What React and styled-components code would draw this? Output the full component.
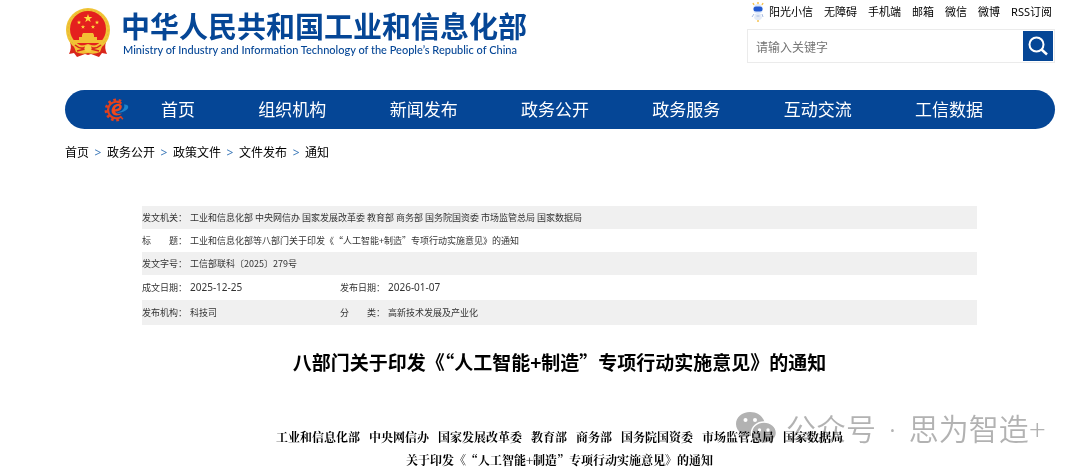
import React from "react";
import styled, { createGlobalStyle } from "styled-components";

const GlobalStyle = createGlobalStyle`
	* {
		box-sizing: border-box;
	}
	body {
		margin: 0;
		background: #fff;
		color: #000;
		font-family: "Noto Sans", "Noto Sans CJK SC", sans-serif;
	}
	a {
		color: inherit;
		text-decoration: none;
	}
`;

const Page = styled.div`
	padding: 0 25px 0 65px;
`;

const Header = styled.header`
	display: flex;
	justify-content: space-between;
	align-items: flex-start;
	height: 90px;
`;

const Brand = styled.a`
	display: flex;
	align-items: flex-start;
	gap: 10px;
	padding-top: 8px;
	color: #054696;
	white-space: nowrap;
`;

const BrandName = styled.h1`
	margin: 0;
	font-family: "Noto Sans CJK SC", sans-serif;
	font-size: 29px;
	font-weight: 700;
	line-height: 34px;
`;

const BrandEnglish = styled.p`
	margin: 0;
	padding-left: 2px;
	font-family: Lato, sans-serif;
	font-size: 11px;
	font-weight: 500;
	line-height: 16px;
`;

const Tools = styled.div`
	width: 308px;
`;

const TopLinks = styled.ul`
	display: flex;
	justify-content: flex-end;
	align-items: center;
	gap: 11px;
	height: 24px;
	margin: 0 0 5px;
	padding: 0 3px 0 0;
	list-style: none;
	font-size: 11px;
	line-height: 24px;
	white-space: nowrap;
`;

const TopLink = styled.a`
	display: flex;
	align-items: center;
	gap: 4px;
`;

const SearchForm = styled.form`
	display: flex;
	align-items: center;
	height: 34px;
	padding-right: 1px;
	border: 1px solid #ebebeb;
`;

const SearchInput = styled.input`
	flex: 1;
	min-width: 0;
	height: 30px;
	padding: 2px 8px 0;
	border: 0;
	outline: 0;
	background: transparent;
	font-family: inherit;
	font-size: 12px;
	&::placeholder {
		color: #757575;
	}
`;

const SearchButton = styled.button`
	display: flex;
	justify-content: center;
	align-items: center;
	width: 30px;
	height: 30px;
	padding: 0;
	border: 0;
	background: #054696;
`;

const Nav = styled.nav`
	display: flex;
	align-items: center;
	height: 39px;
	padding: 0 72px 0 39px;
	border-radius: 20px;
	background: #054696;
	color: #fff;
`;

const NavList = styled.ul`
	flex: 1;
	display: flex;
	justify-content: space-between;
	margin: 0 0 0 32px;
	padding: 0;
	list-style: none;
	font-size: 17px;
	line-height: 40px;
	white-space: nowrap;
`;

const Breadcrumb = styled.nav`
	display: flex;
	gap: 5px;
	height: 77px;
	padding-top: 12px;
	font-size: 12px;
	line-height: 24px;
	white-space: nowrap;
`;

const Separator = styled.span`
	width: 8px;
	color: #3b78b8;
	text-align: center;
`;

const Article = styled.main`
	position: relative;
	padding: 0 78px 0 77px;
`;

const InfoTable = styled.table`
	width: 100%;
	border-collapse: collapse;
	table-layout: fixed;
	color: #333;
	font-family: "Noto Sans CJK SC", sans-serif;
	font-size: 9px;
	line-height: 12px;
	text-spacing-trim: space-all;
`;

const InfoRow = styled.tr`
	height: ${(props) => (props.$tall ? "25px" : "23px")};
	background: ${(props) => (props.$shaded ? "#f0f0f0" : "#fff")};
`;

const InfoLabel = styled.th`
	padding: 0;
	font-weight: 400;
	text-align: left;
	white-space: pre;
`;

const InfoValue = styled.td`
	padding: 0;
	white-space: nowrap;
`;

const InfoDate = styled.time`
	font-family: "Noto Sans", sans-serif;
	font-size: 10px;
`;

const Title = styled.h2`
	margin: 23px 0 49px;
	font-family: "Noto Sans CJK SC", sans-serif;
	font-size: 19px;
	font-weight: 700;
	line-height: 28px;
	text-align: center;
	white-space: nowrap;
`;

const Issuers = styled.p`
	margin: 0;
	font-family: "Noto Serif CJK SC", "Noto Sans CJK SC", serif;
	font-size: 12px;
	font-weight: 700;
	line-height: 23px;
	text-align: center;
	text-spacing-trim: space-all;
	white-space: nowrap;
`;

const Issuer = styled.span`
	margin: 0 3px;
`;

const Watermark = styled.div`
	position: absolute;
	right: 9px;
	bottom: 22px;
	display: flex;
	align-items: center;
	gap: 9px;
	color: #b2b2b2;
	font-family: "Noto Sans", "Noto Sans CJK SC", sans-serif;
	font-size: 30px;
	font-weight: 350;
	line-height: 40px;
	white-space: nowrap;
	mix-blend-mode: multiply;
	pointer-events: none;
`;

const Dot = styled.span`
	margin: 0 5px;
`;

const STAR = "M0-5L1.2-1.6H4.8L1.9.6 3 4 0 1.9-3 4-1.9.6-4.8-1.6H-1.2Z";

const Emblem = () => (
	<svg width="46" height="50" viewBox="0 0 46 50" aria-hidden="true">
		<path d="M5 34q2 6-1 12l5-1 3 4 8-3 3 1 3-1 8 3 3-4 5 1q-3-6-1-12Z" fill="#d9261c" />
		<circle cx="23" cy="22" r="22" fill="#f0c436" />
		<circle cx="23" cy="22" r="20" fill="none" stroke="#e6b432" strokeDasharray="2 2" />
		<circle cx="23" cy="21" r="18" fill="#e4201e" />
		<g fill="#ffdc3c">
			<path d={STAR} transform="translate(23 10.500) scale(.9)" />
			<path d={STAR} transform="translate(14 14.500) scale(.45)" />
			<path d={STAR} transform="translate(32 14.500) scale(.45)" />
			<path d={STAR} transform="translate(18 19) scale(.45)" />
			<path d={STAR} transform="translate(28 19) scale(.45)" />
			<path d="M17 27l1-2h10l1 2v2h3v3h5v3H9v-3h5v-3h3Z" fill="#f3c034" />
		</g>
		<path d="M8 36q7 3 15 0 8 3 15 0l-3 8q-6 3-12 1-6 2-12-1Z" fill="#f3c034" />
		<path d="M10 37q6 5 10 2M36 37q-6 5-10 2M12 43l8-2M34 43l-8-2" fill="none" stroke="#d9261c" strokeWidth="1.500" />
		<circle cx="23" cy="40.500" r="3.500" fill="#f6d04a" />
	</svg>
);

const RobotIcon = () => (
	<svg width="14" height="20" viewBox="0 0 14 20" aria-hidden="true">
		<path d="M7 0v2M2 1l1 2M12 1l-1 2M7 18v2" stroke="#f6c453" strokeWidth="1.500" />
		<circle cx="7" cy="7" r="5" fill="#dce8fb" />
		<rect x="2.500" y="4.500" width="9" height="5" rx="2.500" fill="#2459cf" />
		<path d="M4 12h6l1 4-2 2H5l-2-2Z" fill="#e4ebf7" />
		<path d="M3 12l-2 3M11 12l1 3M5.500 14h3" stroke="#a8bce2" />
	</svg>
);

const SearchIcon = () => (
	<svg width="20" height="20" viewBox="0 0 20 20" fill="none" stroke="#fff" strokeWidth="2" aria-hidden="true">
		<circle cx="8.500" cy="8.500" r="7" />
		<path d="M13.500 13.500 19 18.500" strokeWidth="2.500" />
	</svg>
);

const GearLogo = () => (
	<svg width="25" height="24" viewBox="0 0 25 24" fill="none" aria-hidden="true">
		<path
			d="M17 3.300A10 10 0 1 0 18.500 19.700"
			stroke="#e2401c"
			strokeWidth="3"
			strokeDasharray="2.600 2.600"
		/>
		<path d="M17.500 5.500A8.300 8.300 0 1 0 17.500 18.500" stroke="#e2401c" strokeWidth="2.200" />
		<path
			d="M17.800 8.500C17.500 5 12 4.500 9 8.500 6 13 8 17.500 12.500 17.500c2.500 0 4-.8 5.500-2-3 .5-6 .5-7-2 4 0 7-2 6.800-5ZM10.800 11.200c.7-2.700 4-4 4.400-2.500.3 1.300-2 2.500-4.400 2.500Z"
			fill="#f0481c"
			fillRule="evenodd"
		/>
		<path d="M12 14.500c6-.5 9.500-4 8-8 5-.5 5.500 3.500 2 5.800-3 2-6 3-10 2.200Z" fill="#1c83cc" />
	</svg>
);

const WechatIcon = () => (
	<svg width="42" height="36" viewBox="0 0 42 36" aria-hidden="true">
		<path
			d="M15 1C7 1 1 6 1 13c0 4 2 7 5.500 9.500L5 27l5-2.500q3 .8 6 .5C27 25 30 18 30 13 29 6 23 1 15 1Z"
			fill="#b2b2b2"
		/>
		<path
			d="M29 11c-7 0-12.500 5-12.500 11S22 32.500 29 32.500q2.500 0 4.500-.7l4.500 2.700-1.300-4.500c3-2 4.800-5 4.800-8C41.500 16 36 11 29 11Z"
			fill="#b2b2b2"
			stroke="#fff"
			strokeWidth="1.500"
		/>
		<g fill="#fff">
			<circle cx="10.500" cy="9" r="2" />
			<circle cx="20" cy="9" r="2" />
			<circle cx="24.500" cy="19" r="1.700" />
			<circle cx="33" cy="19" r="1.700" />
		</g>
	</svg>
);

const topLinks = ["阳光小信", "无障碍", "手机端", "邮箱", "微信", "微博", "RSS订阅"];

const navItems = ["首页", "组织机构", "新闻发布", "政务公开", "政务服务", "互动交流", "工信数据"];

const crumbs = ["首页", "政务公开", "政策文件", "文件发布", "通知"];

const issuers = [
	"工业和信息化部",
	"中央网信办",
	"国家发展改革委",
	"教育部",
	"商务部",
	"国务院国资委",
	"市场监管总局",
	"国家数据局",
];

const DocumentInfo = () => (
	<InfoTable>
		<colgroup>
			<col style={{ width: 48 }} />
			<col style={{ width: 150 }} />
			<col style={{ width: 48 }} />
			<col />
		</colgroup>
		<tbody>
			<InfoRow $shaded>
				<InfoLabel scope="row">发文机关：</InfoLabel>
				<InfoValue colSpan={3}>{issuers.join(" ")}</InfoValue>
			</InfoRow>
			<InfoRow>
				<InfoLabel scope="row">标　　题：</InfoLabel>
				<InfoValue colSpan={3}>
					工业和信息化部等八部门关于印发《“人工智能+制造”专项行动实施意见》的通知
				</InfoValue>
			</InfoRow>
			<InfoRow $shaded>
				<InfoLabel scope="row">发文字号：</InfoLabel>
				<InfoValue colSpan={3}>工信部联科〔2025〕279号</InfoValue>
			</InfoRow>
			<InfoRow $tall>
				<InfoLabel scope="row">成文日期：</InfoLabel>
				<InfoValue>
					<InfoDate>2025-12-25</InfoDate>
				</InfoValue>
				<InfoLabel scope="row">发布日期：</InfoLabel>
				<InfoValue>
					<InfoDate>2026-01-07</InfoDate>
				</InfoValue>
			</InfoRow>
			<InfoRow $tall $shaded>
				<InfoLabel scope="row">发布机构：</InfoLabel>
				<InfoValue>科技司</InfoValue>
				<InfoLabel scope="row">分　　类：</InfoLabel>
				<InfoValue>高新技术发展及产业化</InfoValue>
			</InfoRow>
		</tbody>
	</InfoTable>
);

const App = () => {
	return (
		<Page lang="zh-CN">
			<GlobalStyle />
			<Header>
				<Brand href="#">
					<Emblem />
					<div>
						<BrandName>中华人民共和国工业和信息化部</BrandName>
						<BrandEnglish>
							Ministry of Industry and Information Technology of the People’s Republic of China
						</BrandEnglish>
					</div>
				</Brand>
				<Tools>
					<TopLinks>
						{topLinks.map((label, index) => (
							<li key={label}>
								<TopLink href="#">
									{index === 0 && <RobotIcon />}
									{label}
								</TopLink>
							</li>
						))}
					</TopLinks>
					<SearchForm role="search">
						<SearchInput type="text" placeholder="请输入关键字" aria-label="请输入关键字" />
						<SearchButton type="submit" aria-label="搜索">
							<SearchIcon />
						</SearchButton>
					</SearchForm>
				</Tools>
			</Header>
			<Nav>
				<GearLogo />
				<NavList>
					{navItems.map((label) => (
						<li key={label}>
							<a href="#">{label}</a>
						</li>
					))}
				</NavList>
			</Nav>
			<Breadcrumb aria-label="当前位置">
				{crumbs.map((label, index) => (
					<React.Fragment key={label}>
						{index > 0 && <Separator>&gt;</Separator>}
						<a href="#">{label}</a>
					</React.Fragment>
				))}
			</Breadcrumb>
			<Article>
				<DocumentInfo />
				<Title>八部门关于印发《“人工智能+制造”专项行动实施意见》的通知</Title>
				<Issuers>
					{issuers.map((name) => (
						<React.Fragment key={name}>
							<Issuer>{name}</Issuer>{" "}
						</React.Fragment>
					))}
				</Issuers>
				<Issuers>关于印发《“人工智能+制造”专项行动实施意见》的通知</Issuers>
				<Watermark>
					<WechatIcon />
					<span>
						公众号 <Dot>·</Dot> 思为智造+
					</span>
				</Watermark>
			</Article>
		</Page>
	);
};

export default App;
